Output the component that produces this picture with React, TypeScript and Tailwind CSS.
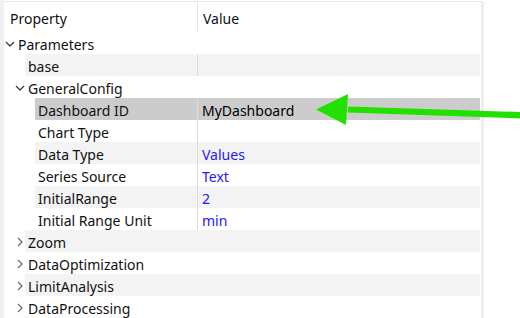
import { ReactNode } from 'react';

type Row = {
  label: string;
  level: 0 | 1 | 2;
  toggle?: 'open' | 'closed';
  value?: string;
  blue?: boolean;
  selected?: boolean;
};

const rows: Row[] = [
  { label: 'Parameters', level: 0, toggle: 'open' },
  { label: 'base', level: 1, value: '' },
  { label: 'GeneralConfig', level: 1, toggle: 'open' },
  { label: 'Dashboard ID', level: 2, value: 'MyDashboard', selected: true },
  { label: 'Chart Type', level: 2, value: '' },
  { label: 'Data Type', level: 2, value: 'Values', blue: true },
  { label: 'Series Source', level: 2, value: 'Text', blue: true },
  { label: 'InitialRange', level: 2, value: '2', blue: true },
  { label: 'Initial Range Unit', level: 2, value: 'min', blue: true },
  { label: 'Zoom', level: 1, toggle: 'closed' },
  { label: 'DataOptimization', level: 1, toggle: 'closed' },
  { label: 'LimitAnalysis', level: 1, toggle: 'closed' },
  { label: 'DataProcessing', level: 1, toggle: 'closed' },
];

// indent (px from panel edge) where the row background begins
const indentClass = ['w-[11px]', 'w-[21px]', 'w-[31px]'];
const labelClass = ['w-[182px]', 'w-[172px]', 'w-[162px]'];

function Chevron({ open }: { open: boolean }) {
  return open ? (
    <svg width="10" height="10" viewBox="0 0 10 10" fill="none" stroke="#3c3c3c" strokeWidth="1.3">
      <polyline points="1,3 5,7 9,3" />
    </svg>
  ) : (
    <svg width="10" height="10" viewBox="0 0 10 10" fill="none" stroke="#6e6e6e" strokeWidth="1.3">
      <polyline points="3,1 7,5 3,9" />
    </svg>
  );
}

function TreeRow({ row, index }: { row: Row; index: number }) {
  const bg = row.selected ? 'bg-[#cccccc]' : index % 2 === 1 ? 'bg-[#f3f3f3]' : 'bg-white';
  const isLeaf = row.value !== undefined;
  let cells: ReactNode;
  if (isLeaf) {
    cells = (
      <>
        <div className={`${labelClass[row.level]} shrink-0 pl-[3px] pt-[2px] truncate`}>{row.label}</div>
        <div className={`flex-1 self-stretch flex items-center border-l border-[#dcdcdc] pl-[4px] pt-[2px] ${row.blue ? 'text-[#2418ff]' : 'text-black'}`}>
          {row.value}
        </div>
      </>
    );
  } else {
    cells = <div className="pl-[3px] pt-[2px]">{row.label}</div>;
  }
  return (
    <div className="flex h-[22px] items-stretch">
      <div className={`${indentClass[row.level]} shrink-0 flex items-center justify-end pt-[1px]`}>
        {row.toggle && (
          <div className="w-[10px] flex items-center justify-center">
            <Chevron open={row.toggle === 'open'} />
          </div>
        )}
      </div>
      <div className={`flex-1 flex items-center ${bg}`}>{cells}</div>
    </div>
  );
}

export default function App() {
  return (
    <div
      className="relative w-[520px] h-[318px] overflow-hidden bg-white flex text-[14px] text-[#111]"
      style={{ fontFamily: '"Noto Sans", "Open Sans", Arial, sans-serif' }}
    >
      {/* left dock strip */}
      <div className="w-[4px] shrink-0 bg-[#f0f0f0]" />

      {/* property table */}
      <div className="w-[479px] shrink-0 flex flex-col pt-[1px]">
        <div className="h-[2px] bg-[#e8e8e8]" />
        <div className="flex flex-1">
          <div className="w-[476px] shrink-0 flex flex-col">
            {/* header */}
            <div className="flex h-[30px] items-stretch">
              <div className="w-[193px] shrink-0 flex items-center pl-[6px] pt-[2px]">Property</div>
              <div className="w-px bg-[#e3e3e3] mb-[1px]" />
              <div className="flex-1 flex items-center pl-[5px] pt-[2px]">Value</div>
            </div>
            {rows.map((r, i) => (
              <TreeRow key={r.label} row={r} index={i} />
            ))}
          </div>
          <div className="w-px shrink-0" />
          <div className="w-[3px] shrink-0 bg-[#eeeeee]" />
        </div>
      </div>

      {/* green annotation arrow */}
      <svg className="absolute left-0 top-0" width="520" height="318" viewBox="0 0 520 318">
        <polygon points="348,106.5 521,112 521,118.5 348,112.5" fill="#22e000" />
        <polygon points="316,109.5 348,94 346,125" fill="#22e000" />
      </svg>
    </div>
  );
}
